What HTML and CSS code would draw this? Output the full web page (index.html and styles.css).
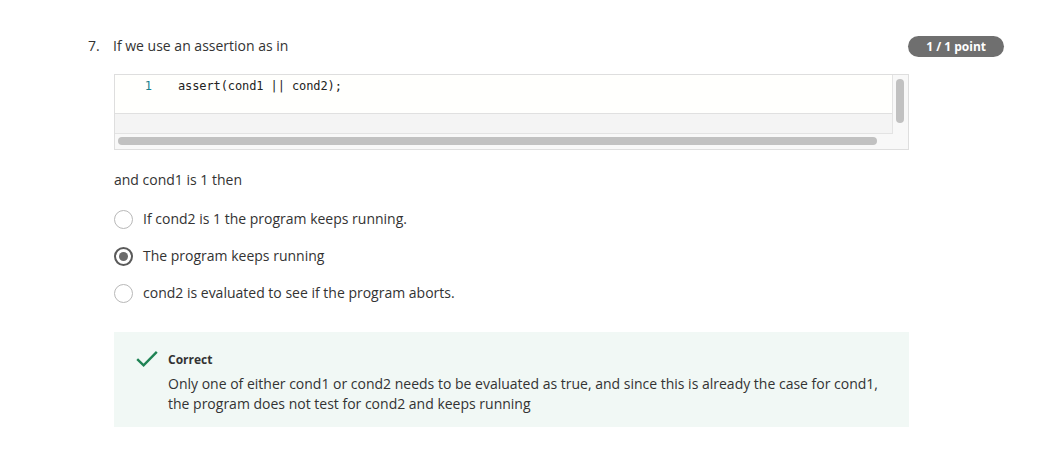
FILE: index.html
```html
<!DOCTYPE html>
<html>
<head>
<meta charset="utf-8">
<link rel="stylesheet" href="styles.css">
</head>
<body>
<div class="page">
  <div class="q-head">
    <span class="q-num">7.</span>
    <span class="q-text">If we use an assertion as in</span>
    <span class="badge">1 / 1 point</span>
  </div>
  <div class="q-body">
    <div class="code">
      <div class="code-main">
        <div class="code-view">
          <div class="code-lines">
            <div class="code-line"><span class="ln">1</span><span class="src">assert(cond1 || cond2);</span></div>
          </div>
          <div class="code-pad"></div>
        </div>
        <div class="vscroll"><div class="vthumb"></div></div>
      </div>
      <div class="hscroll"><div class="hthumb"></div></div>
    </div>
    <p class="lead">and cond1 is 1 then</p>
    <div class="options">
      <div class="opt"><span class="radio"></span><span>If cond2 is 1 the program keeps running.</span></div>
      <div class="opt"><span class="radio checked"></span><span>The program keeps running</span></div>
      <div class="opt"><span class="radio"></span><span>cond2 is evaluated to see if the program aborts.</span></div>
    </div>
    <div class="feedback">
      <svg class="check" width="22" height="18" viewBox="0 0 22 18"><path d="M1.2 9.2 L7.6 15.4 L20.8 1.8" fill="none" stroke="#1f8354" stroke-width="2.4"/></svg>
      <div class="fb-text">
        <div class="fb-title">Correct</div>
        <div class="fb-body">Only one of either cond1 or cond2 needs to be evaluated as true, and since this is already the case for cond1, the program does not test for cond2 and keeps running</div>
      </div>
    </div>
  </div>
</div>
</body>
</html>
```

FILE: styles.css
```css
* { box-sizing: border-box; }
body {
  margin: 0;
  background: #fff;
  font-family: "Open Sans", "Noto Sans", sans-serif;
  color: #1f1f1f;
  font-size: 14px;
}
.page {
  padding: 36px 52px 0 88px;
}
.q-head {
  display: flex;
  align-items: flex-start;
  height: 38px;
}
.q-num {
  width: 25px;
  line-height: 20px;
  color: #333;
}
.q-text {
  flex: 1;
  line-height: 20px;
  color: #333;
}
.badge {
  height: 21px;
  line-height: 21px;
  padding: 0 18px;
  border-radius: 11px;
  background: #6f6f6f;
  color: #fff;
  font-size: 12px;
  font-weight: 700;
}
.q-body {
  margin-left: 26px;
  width: 795px;
}
.code {
  border: 1px solid #dedede;
  background: #f8f8f8;
  height: 76px;
  display: flex;
  flex-direction: column;
}
.code-main {
  display: flex;
  height: 60px;
}
.code-view {
  flex: 1;
  border: 1px solid #e3e3e3;
  border-top: none;
  border-left: none;
  background: #f4f4f4;
  display: flex;
  flex-direction: column;
}
.code-lines {
  background: #fffffd;
  height: 39px;
  border-bottom: 1px solid #e0e0e0;
}
.code-line {
  display: flex;
  font-family: "DejaVu Sans Mono", monospace;
  font-size: 12px;
  line-height: 22px;
  height: 22px;
}
.ln {
  width: 63px;
  padding-right: 26px;
  text-align: right;
  color: #1a7f8e;
}
.src {
  color: #222;
  letter-spacing: -0.1px;
}
.vscroll {
  width: 15px;
  padding: 4px 3px 0 3px;
}
.vthumb {
  width: 8px;
  height: 44px;
  border-radius: 4px;
  background: #c1c1c1;
}
.hscroll {
  height: 15px;
  padding: 3px 31px 0 3px;
}
.hthumb {
  height: 8px;
  border-radius: 4px;
  background: #c1c1c1;
}
.lead {
  margin: 20px 0 0 0;
  line-height: 20px;
  color: #333;
}
.options {
  margin-top: 19px;
  display: flex;
  flex-direction: column;
  gap: 17px;
}
.opt {
  display: flex;
  align-items: center;
  height: 20px;
  line-height: 20px;
  color: #333;
}
.radio {
  flex: none;
  width: 19px;
  height: 19px;
  border-radius: 50%;
  border: 1.5px solid #b8b8b8;
  margin-right: 10px;
  background: #fff;
  position: relative;
}
.radio.checked {
  border: 2px solid #5a5a5a;
}
.radio.checked::after {
  content: "";
  position: absolute;
  left: 3px;
  top: 3px;
  width: 9px;
  height: 9px;
  border-radius: 50%;
  background: #6b6b6b;
}
.feedback {
  margin-top: 29px;
  background: #f1f8f5;
  height: 95px;
  display: flex;
  padding: 18px 20px 0 22px;
}
.check {
  flex: none;
  width: 22px;
  height: 18px;
  margin-right: 10px;
}
.fb-title {
  font-size: 12px;
  font-weight: 700;
  line-height: 20px;
  color: #333;
}
.fb-body {
  margin-top: 4px;
  line-height: 20px;
  color: #333;
}
```
